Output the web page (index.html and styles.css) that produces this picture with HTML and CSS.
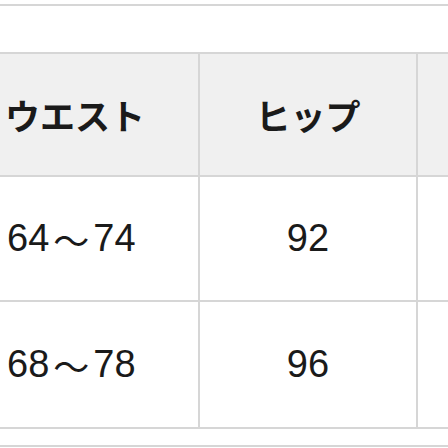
FILE: index.html
```html
<!DOCTYPE html>
<html lang="ja">
<head>
<meta charset="utf-8">
<link rel="stylesheet" href="styles.css">
</head>
<body>
<div class="sizes">
  <div class="cell full"></div>
  <div class="cell head first">ウエスト</div>
  <div class="cell head">ヒップ</div>
  <div class="cell head"></div>
  <div class="cell first">64<span class="wave">〜</span>74</div>
  <div class="cell">92</div>
  <div class="cell"></div>
  <div class="cell first">68<span class="wave">〜</span>78</div>
  <div class="cell">96</div>
  <div class="cell"></div>
  <div class="cell full"></div>
</div>
</body>
</html>
```
FILE: styles.css
```css
html, body {
  margin: 0;
  padding: 0;
  background: #ffffff;
  overflow: hidden;
}
.sizes {
  margin-top: 4px;
  display: grid;
  grid-template-columns: 198px 216px 1fr;
  grid-template-rows: 46px 121px 123px 125px 16px;
  gap: 2px;
  padding: 2px 0;
  background: #d6d6d6;
  font-family: "Liberation Sans", "Noto Sans CJK JP", sans-serif;
  font-size: 38px;
  color: #1a1a1a;
}
.cell {
  background: #ffffff;
  display: flex;
  align-items: center;
  justify-content: center;
}
.full {
  grid-column: 1 / -1;
}
.head {
  background: #f0f0f0;
  font-family: "Noto Sans CJK JP", sans-serif;
  font-weight: 700;
  font-size: 35px;
}
.first {
  justify-content: flex-start;
  padding-left: 7px;
}
.head.first {
  padding-left: 5px;
}
.wave {
  font-family: "Noto Sans CJK JP", sans-serif;
  font-size: 36px;
  margin: 0 4px;
}
```
